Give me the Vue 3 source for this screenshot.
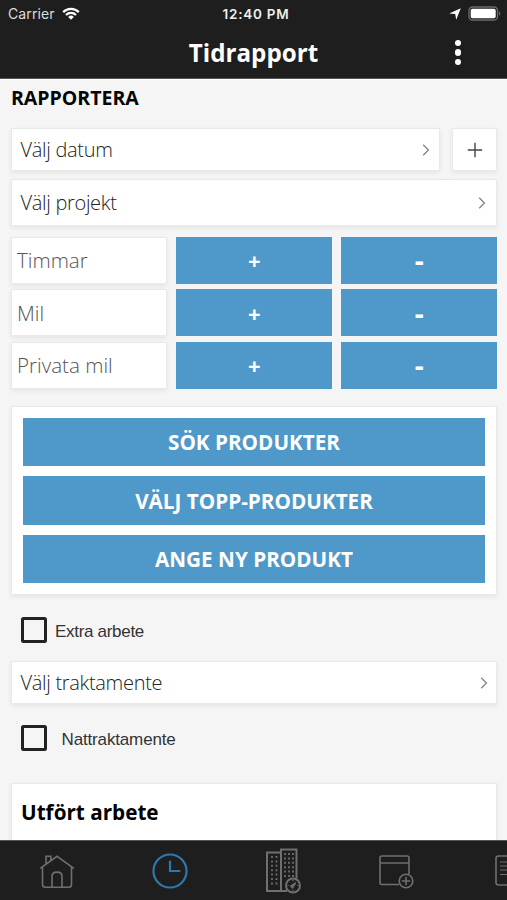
<template>
  <div class="app">
    <header class="header">
      <div class="status-bar">
        <div class="status-left">
          <span class="carrier">Carrier</span>
          <svg width="18" height="13" viewBox="0 0 18 13" fill="none" stroke="#fff" stroke-width="2.2">
            <path d="M1.2 5.1a11 11 0 0 1 15.6 0" />
            <path d="M4 8a7.1 7.1 0 0 1 10 0" />
            <path d="M9 12.7 6.2 9.9a4 4 0 0 1 5.6 0z" fill="#fff" stroke="none" />
          </svg>
        </div>
        <span class="clock">12:40 PM</span>
        <div class="status-right">
          <svg width="12" height="12" viewBox="0 0 12 12" fill="#fff">
            <path d="M11.8.2 7.2 11.8 6.2 6 .2 5.4z" />
          </svg>
          <svg width="33" height="15" viewBox="0 0 33 15">
            <rect x="1" y="1" width="28.5" height="13" rx="3.6" fill="none" stroke="#6b6b6b" stroke-width="1.3" />
            <rect x="2.7" y="2.7" width="25" height="9.6" rx="1.8" fill="#fff" />
            <path d="M31 5.2c1.7.8 1.7 3.8 0 4.6z" fill="#6b6b6b" />
          </svg>
        </div>
      </div>
      <div class="nav-bar">
        <h1>Tidrapport</h1>
        <button class="more-btn" type="button">
          <span></span><span></span><span></span>
        </button>
      </div>
    </header>

    <main class="content">
      <h2 class="section-title">RAPPORTERA</h2>

      <div class="date-row">
        <div class="select-box date">
          <span>Välj datum</span>
          <svg class="chevron" viewBox="0 0 8 12"><path d="M1.2.8 6.4 6l-5.2 5.2" /></svg>
        </div>
        <button class="add-btn" type="button">
          <svg width="16" height="16" viewBox="0 0 16 16"><path d="M8 .8v14.4M.8 8h14.4" /></svg>
        </button>
      </div>

      <div class="select-box project">
        <span>Välj projekt</span>
        <svg class="chevron" viewBox="0 0 8 12"><path d="M1.2.8 6.4 6l-5.2 5.2" /></svg>
      </div>

      <div class="counters">
        <div v-for="counter in counters" :key="counter.label" class="counter-row">
          <div class="counter-field">{{ counter.value || counter.label }}</div>
          <button class="blue-btn plus" type="button" @click="counter.value++">+</button>
          <button class="blue-btn minus" type="button" @click="decrease(counter)">-</button>
        </div>
      </div>

      <div class="product-card">
        <button v-for="action in productActions" :key="action" class="blue-btn" type="button">
          {{ action }}
        </button>
      </div>

      <div class="check-row extra" @click="extraWork = !extraWork">
        <span class="checkbox" :class="{ checked: extraWork }"></span>
        <span class="check-label">Extra arbete</span>
      </div>

      <div class="select-box allowance">
        <span>Välj traktamente</span>
        <svg class="chevron" viewBox="0 0 8 12"><path d="M1.2.8 6.4 6l-5.2 5.2" /></svg>
      </div>

      <div class="check-row night" @click="nightAllowance = !nightAllowance">
        <span class="checkbox" :class="{ checked: nightAllowance }"></span>
        <span class="check-label">Nattraktamente</span>
      </div>

      <div class="work-card">
        <h3>Utfört arbete</h3>
      </div>
    </main>

    <nav class="tab-bar">
      <div class="tab">
        <svg width="36" height="36" viewBox="0 0 36 36">
          <path d="M1.2 15.3 18 3.3l16.8 12M3.5 14v17.5q0 2.8 2.8 2.8h23.4q2.8 0 2.8-2.8V14M7 10.6V3.3h4.8v4M13 34V23.3q0-4.2 5-4.2t5 4.2V34" />
        </svg>
      </div>
      <div class="tab active">
        <svg width="36" height="36" viewBox="0 0 36 36">
          <circle cx="18" cy="18" r="16.5" />
          <path d="M18 7.8V18h10.3" />
        </svg>
      </div>
      <div class="tab">
        <svg class="building" width="36" height="46" viewBox="0 0 36 46">
          <path d="M22 43H2V4.5h14M16 43V1.5h15.5v29" />
          <path class="windows" d="M7 8v29M11.5 8v29" />
          <path class="windows" d="M20 5v24M24 5v24M28 5v24" />
          <circle cx="28" cy="37.5" r="7" />
          <path class="hands" d="m26 39.5 4-4M28 32v1.2M28 41.8V43M22.5 37.5h1.2M32.3 37.5h1.2" />
          <path class="hands" d="m25.8 38 1.7 2 3.3-5.3z" />
        </svg>
      </div>
      <div class="tab">
        <svg width="36" height="36" viewBox="0 0 36 36">
          <path d="M21 31.5H4q-2 0-2-2V5q0-2 2-2h25q2 0 2 2v16M2 10h29" />
          <circle cx="28" cy="28" r="6.8" />
          <path d="M28 23.8v8.4M23.8 28h8.4" />
        </svg>
      </div>
      <div class="tab">
        <svg width="36" height="36" viewBox="0 0 36 36">
          <rect x="5" y="3" width="28" height="29" rx="2.5" />
          <path class="lines" d="M9 9h20M9 13h20M9 17h20M9 21.5h20" />
        </svg>
      </div>
    </nav>
  </div>
</template>

<script setup>
import { ref } from 'vue'

const counters = ref([
  { label: 'Timmar', value: 0 },
  { label: 'Mil', value: 0 },
  { label: 'Privata mil', value: 0 }
])
const productActions = ['SÖK PRODUKTER', 'VÄLJ TOPP-PRODUKTER', 'ANGE NY PRODUKT']
const extraWork = ref(false)
const nightAllowance = ref(false)

const decrease = (counter) => {
  if (counter.value > 0) counter.value--
}
</script>

<style>
body {
  margin: 0;
  overflow: hidden;
}
</style>

<style scoped>
.app {
  width: 507px;
  height: 900px;
  display: flex;
  flex-direction: column;
  overflow: hidden;
  background: #f5f5f5;
  font-family: 'Open Sans', sans-serif;
}

.app * {
  box-sizing: border-box;
}

button {
  border: 0;
  padding: 0;
  margin: 0;
  font-family: inherit;
  cursor: pointer;
}

h1, h2, h3 {
  margin: 0;
  font-weight: 700;
}

.header {
  height: 79px;
  flex: none;
  background: #1e1e1e;
  border-bottom: 1px solid #555;
  color: #fff;
}

.status-bar {
  height: 27px;
  display: grid;
  grid-template-columns: 1fr auto 1fr;
  align-items: center;
  padding: 0 6px 0 8px;
  font-family: Inter, sans-serif;
}

.status-left,
.status-right {
  display: flex;
  align-items: center;
  gap: 7px;
}

.status-right {
  justify-content: flex-end;
}

.carrier {
  font-size: 14px;
  color: #ddd;
  letter-spacing: 0.1px;
}

.clock {
  padding-left: 3px;
  font-size: 13.5px;
  font-weight: 600;
  letter-spacing: 0.75px;
  color: #eee;
}

.nav-bar {
  height: 51px;
  display: grid;
  grid-template-columns: 1fr auto 1fr;
  align-items: center;
}

h1 {
  grid-column: 2;
  font-size: 24.2px;
  line-height: 51px;
}

.more-btn {
  justify-self: end;
  margin-right: 46px;
  background: none;
  display: flex;
  flex-direction: column;
  gap: 3px;
}

.more-btn span {
  width: 6.5px;
  height: 6.5px;
  border-radius: 50%;
  background: #fff;
}

.content {
  flex: 1;
  min-height: 0;
  overflow: hidden;
  padding: 0 10px 0 11px;
  border-top: 1px solid #fff;
}

.section-title {
  font-size: 19.5px;
  line-height: 35px;
  height: 48px;
  color: #050505;
}

.date-row {
  display: flex;
  gap: 12px;
  height: 43px;
}

.select-box,
.add-btn,
.counter-field,
.product-card,
.work-card {
  background: #fff;
  border: 1px solid #e9e9e9;
  box-shadow: 0 2px 5px rgba(0, 0, 0, 0.07);
}

.select-box {
  display: flex;
  align-items: center;
  justify-content: space-between;
  padding: 0 9px 0 8.5px;
  font-size: 20px;
  font-weight: 300;
  letter-spacing: -0.3px;
  color: #222;
}

.date {
  flex: 1;
}

.chevron {
  width: 8px;
  height: 12px;
  fill: none;
  stroke: #888;
  stroke-width: 1.4;
}

.project .chevron {
  margin-right: 1.5px;
}

.allowance .chevron {
  margin-right: -1px;
}

.add-btn {
  width: 45px;
  display: flex;
  align-items: center;
  justify-content: center;
}

.add-btn svg {
  stroke: #444;
  stroke-width: 1.4;
}

.project {
  height: 47px;
  margin-top: 8px;
}

.counters {
  display: flex;
  flex-direction: column;
  gap: 5.5px;
  margin-top: 10.5px;
}

.counter-row {
  display: grid;
  grid-template-columns: 156px 156px 156px;
  column-gap: 9.2px;
  height: 47px;
}

.counter-field {
  display: flex;
  align-items: center;
  padding-left: 5px;
  font-size: 20.6px;
  font-weight: 300;
  color: #555;
}

.blue-btn {
  background: #4f98ca;
  color: #fff;
  font-size: 21px;
  font-weight: 700;
  line-height: 1;
}

.plus {
  font-size: 22px;
}

.minus {
  font-size: 28px;
}

.product-card {
  height: 189px;
  margin-top: 17.5px;
  padding: 11px;
  display: flex;
  flex-direction: column;
  gap: 10px;
}

.product-card .blue-btn {
  flex: 1;
  padding-top: 1px;
  font-size: 20.7px;
}

.check-row {
  display: flex;
  align-items: center;
  padding-left: 10px;
  height: 26px;
}

.checkbox {
  width: 26px;
  height: 26px;
  border: 3px solid #222;
  border-radius: 2.5px;
}

.checkbox.checked {
  background: #4f98ca;
}

.check-label {
  font-family: 'Liberation Sans', sans-serif;
  font-size: 17px;
  letter-spacing: -0.3px;
  color: #333;
  margin-left: 8px;
  padding-top: 3px;
}

.extra {
  margin-top: 22px;
}

.allowance {
  height: 43px;
  margin-top: 18px;
}

.night {
  margin-top: 21px;
}

.night .check-label {
  margin-left: 14.5px;
  padding-top: 4px;
  letter-spacing: -0.15px;
}

.work-card {
  height: 90px;
  margin-top: 32px;
  padding: 13px 9px;
}

.work-card h3 {
  font-size: 20.7px;
  line-height: 30px;
  color: #000;
}

.tab-bar {
  height: 60px;
  flex: none;
  display: flex;
  background: #1e1e1e;
  border-top: 1px solid #555;
}

.tab {
  flex: 0 0 113px;
  display: flex;
  align-items: center;
  justify-content: center;
}

.tab svg {
  fill: none;
  stroke: #6f6f6f;
  stroke-width: 1.6;
}

.tab.active svg {
  stroke: #2f78aa;
  stroke-width: 2.2;
}

.tab .building {
  stroke-width: 2;
}

.tab .windows {
  stroke-width: 1.8;
  stroke-dasharray: 2 2.4;
}

.tab .hands,
.tab .lines {
  stroke-width: 1.2;
}
</style>
